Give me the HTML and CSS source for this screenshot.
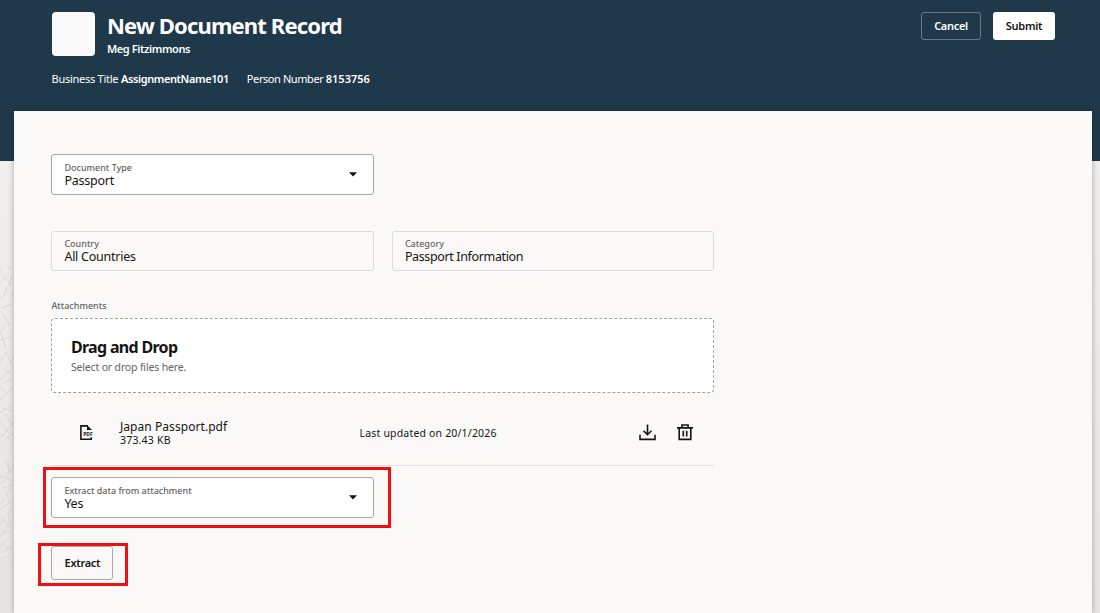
FILE: index.html
```html
<!DOCTYPE html>
<html lang="en">
<head>
<meta charset="utf-8">
<title>New Document Record</title>
<link rel="stylesheet" href="styles.css">
</head>
<body>
<div class="page">
  <svg class="texture" width="14" height="310" viewBox="0 0 14 310" fill="none" aria-hidden="true">
    <path d="M0 5l3 3M8 3l2 3M0 20l7-7M3 12l8 10M12 12l-3 11M0 36q6-3 7-13M12 34l2-7M2 45l10-4M3 52l7 10M0 70l6-9M0 77l12-3M1 71l5 14M0 99l7-10M6 89l5 11M10 102l4-9M3 106l9 5M1 117l12-13M0 123l7 8M4 120l9-5M0 137l13-12M2 145l10 3M0 150l12-9M5 150l8 14M0 158l9 12M1 175l12-16M0 170l12 8M5 177l8-7M5 196l4 12M0 216l8-7M8 196l1 14M2 221l11-17M0 213l13 5M3 225l9-3M1 241l10-17M5 227l5 14M0 246l8-5M0 261l12-16M1 252l8 13M8 250l3 14M0 274l9-12M2 270l9-2M0 283l12-11M2 279l7 8M4 289l8-5M1 296l9-4M12 297l2 5"/>
  </svg>
  <header class="header">
    <div class="identity">
      <div class="avatar"></div>
      <div>
        <h1 class="title">New Document Record</h1>
        <div class="person">Meg Fitzimmons</div>
      </div>
      <div class="actions">
        <button class="btn btn-outline">Cancel</button>
        <button class="btn btn-solid">Submit</button>
      </div>
    </div>
    <div class="facts">
      <div>Business Title <b>AssignmentName101</b></div>
      <div>Person Number <b class="number">8153756</b></div>
    </div>
  </header>
  <main class="card">
    <div class="field select">
      <div><div class="label">Document Type</div><div class="value">Passport</div></div>
      <svg class="caret" width="8" height="5" viewBox="0 0 8 5"><path d="M0 0.3h8L4 4.5z"/></svg>
    </div>
    <div class="row">
      <div class="field readonly"><div><div class="label">Country</div><div class="value">All Countries</div></div></div>
      <div class="field readonly"><div><div class="label">Category</div><div class="value value-long">Passport Information</div></div></div>
    </div>
    <div class="label attachments">Attachments</div>
    <div class="drop">
      <div class="drop-title">Drag and Drop</div>
      <div class="drop-hint">Select or drop files here.</div>
    </div>
    <div class="file">
      <svg class="pdf" width="16" height="18" viewBox="0 0 16 18" fill="none">
        <path d="M12.2 13.3v2H1.9V1.9h7" stroke="#161513" stroke-width="1.6"/>
        <path d="M8 1.1l5 5H8z" fill="#161513"/>
        <text x="4.2" y="12.3">PDF</text>
      </svg>
      <div class="file-info">
        <div class="file-name">Japan Passport.pdf</div>
        <div class="file-size">373.43 KB</div>
      </div>
      <div class="file-date">Last updated on 20/1/2026</div>
      <svg class="download" width="17" height="17" viewBox="0 0 17 17" fill="none" stroke="#161513" stroke-width="1.6">
        <path d="M8.5 0.5v10M4.5 6.7l4 4 4-4M1 10.8v4.6h15v-4.6"/>
      </svg>
      <svg class="trash" width="16" height="17" viewBox="0 0 16 17" fill="none" stroke="#161513" stroke-width="1.6">
        <path d="M0 3.9h16M4.9 3.9V1h6.2v2.9M2.2 3.9v11.5h11.6V3.9M6.3 6.8v5.7M9.7 6.8v5.7"/>
      </svg>
    </div>
    <div class="marked marked-select">
      <div class="field select">
        <div><div class="label">Extract data from attachment</div><div class="value">Yes</div></div>
        <svg class="caret" width="8" height="5" viewBox="0 0 8 5"><path d="M0 0.3h8L4 4.5z"/></svg>
      </div>
    </div>
    <div class="marked marked-button">
      <button class="btn btn-extract">Extract</button>
    </div>
  </main>
</div>
</body>
</html>
```
FILE: styles.css
```css
* { box-sizing: border-box; }
body {
  margin: 0;
  font-family: "Noto Sans", "Open Sans", sans-serif;
  color: #161513;
  overflow: hidden;
}
.page {
  position: relative;
  height: 613px;
  overflow: hidden;
  display: flex;
  flex-direction: column;
  background: linear-gradient(#1f394b 161px, #f0efed 161px, #e6e5e3 613px);
}
.texture {
  position: absolute;
  left: 0;
  top: 263px;
  stroke: #d9d8d5;
  stroke-width: 1;
}
.header {
  height: 111px;
  flex: none;
  padding: 12px 45px 0 51.5px;
  color: #fff;
}
.identity { display: flex; height: 44px; }
.avatar {
  width: 43.5px;
  height: 43.5px;
  margin-right: 12px;
  border-radius: 4px;
  background: #fafafa;
}
.title { margin: 0; font-size: 22px; line-height: 27px; font-weight: 700; letter-spacing: -0.84px; white-space: nowrap; }
.person { font-size: 11px; line-height: 16px; margin-top: 2px; font-weight: 600; letter-spacing: -0.4px; }
.actions { margin-left: auto; display: flex; gap: 12px; }
.btn {
  font: 600 11px/16px "Noto Sans", sans-serif;
  letter-spacing: -0.3px;
  height: 28px;
  border-radius: 3px;
  padding: 0;
  color: #161513;
}
.btn-outline { width: 60px; color: #fff; background: transparent; border: 1px solid #667985; }
.btn-solid { width: 62px; background: #fff; border: 0; }
.btn-extract { width: 62px; height: 34px; background: transparent; border: 1px solid #a9a8a6; }
.facts { display: flex; gap: 18px; margin-top: 15px; font-size: 11px; line-height: 16px; letter-spacing: -0.26px; white-space: nowrap; }
.facts b { font-weight: 600; letter-spacing: -0.4px; }
.facts .number { letter-spacing: 0; }
.facts div + div { letter-spacing: -0.42px; }
.card {
  position: relative;
  flex: 1;
  margin: 0 8px 0 14px;
  padding: 43px 37px 0 37.4px;
  background: #faf9f7;
  box-shadow: 0 0 6px rgba(0, 0, 0, 0.3);
}
.field {
  width: 322.3px;
  height: 41px;
  display: flex;
  justify-content: space-between;
  padding: 7px 15.5px 0 12px;
  border: 1px solid #a9a8a6;
  border-radius: 3px;
  white-space: nowrap;
}
.select { background: #fff; }
.readonly { border-color: #dddcda; }
.label { font-size: 9px; line-height: 12px; font-weight: 500; color: #65635f; }
.value { font-size: 12.5px; line-height: 14px; letter-spacing: -0.24px; }
.value-long { letter-spacing: -0.36px; }
.caret { margin-top: 10px; fill: #161513; }
.row { display: flex; gap: 18.2px; margin-top: 36px; }
.row .field { height: 40px; padding-top: 6px; }
.attachments { margin-top: 29px; }
.drop {
  width: 662.6px;
  height: 75px;
  margin: 6px 0 1px;
  padding: 18px 18.5px;
  background: #fff;
  border: 1px dashed #a3a19e;
  border-radius: 4px;
}
.drop-title { font-size: 16px; line-height: 20px; font-weight: 700; letter-spacing: -0.68px; }
.drop-hint { font-size: 10.5px; line-height: 14px; margin-top: 3px; letter-spacing: -0.16px; color: #65635f; }
.file {
  width: 662.6px;
  height: 72px;
  display: flex;
  align-items: center;
  padding: 0 20.8px 0 27.6px;
  border-bottom: 1px solid #e2e1df;
}
.pdf { margin-top: 6px; }
.pdf text { font: 700 5px "Noto Sans", sans-serif; fill: #161513; }
.file-info { width: 239.6px; margin: 6px 0 0 25px; }
.file-name { font-size: 12px; line-height: 15px; letter-spacing: 0.06px; }
.file-size { font-size: 10.5px; line-height: 12px; letter-spacing: 0.2px; }
.file-date { flex: 1; margin-top: 6px; font-size: 10.5px; line-height: 14px; letter-spacing: 0.18px; }
.download, .trash { margin-top: 6px; }
.trash { margin-left: 21px; }
.marked { position: relative; width: max-content; }
.marked::after { content: ""; position: absolute; border: 3px solid #ee1111; }
.marked-select { margin-top: 11px; }
.marked-select::after { inset: -10px -17.5px -10px -8.4px; }
.marked-button { margin-top: 28px; display: flex; }
.marked-button::after { inset: -3px -15px -6px -13.4px; }
```
